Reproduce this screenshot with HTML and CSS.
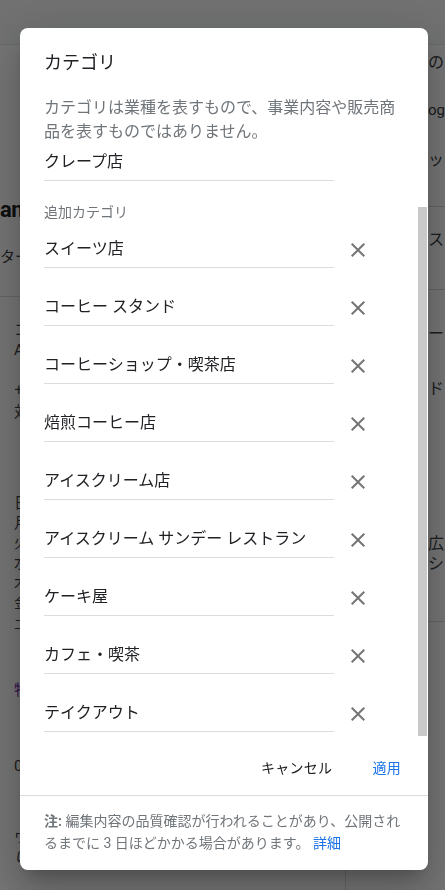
FILE: index.html
```html
<!DOCTYPE html>
<html lang="ja">

<head>
    <meta charset="UTF-8" />
    <meta name="viewport" content="width=device-width, initial-scale=1.0" />
    <title>カテゴリ</title>

    <link rel="stylesheet" href="styles.css">
</head>

<body>
    <!-- page behind the modal, only its edges show -->
    <div class="page">
        <header class="bg-header"></header>
        <div class="bg-cols">
            <section class="bg-main">
                <div class="bg-hero"></div>
                <h1 class="bg-title">ant</h1>
                <div class="bg-sub">ター</div>
                <div class="bg-rule"></div>
                <div class="bg-block bg-block--first">
                    <p>コ</p>
                    <p>A</p>
                </div>
                <div class="bg-block">
                    <p>サ</p>
                    <p>対</p>
                </div>
                <div class="bg-block bg-block--hours">
                    <p>日</p>
                    <p>月</p>
                    <p>火</p>
                    <p>水</p>
                    <p>木</p>
                    <p>金</p>
                    <p>土</p>
                </div>
                <div class="bg-block bg-block--link">
                    <p>特</p>
                </div>
                <div class="bg-block bg-block--phone">
                    <p>0</p>
                </div>
                <div class="bg-block bg-block--web">
                    <p>ウ</p>
                    <p class="bg-em">い</p>
                </div>
            </section>
            <aside class="bg-side">
                <p class="bg-s1">の</p>
                <p class="bg-s2">ogl</p>
                <p class="bg-s3">ップ</p>
                <div class="bg-rule bg-s4"></div>
                <p class="bg-s5">スキ</p>
                <div class="bg-rule bg-s6"></div>
                <p class="bg-s7">ー</p>
                <p class="bg-s8">ド</p>
                <p class="bg-s9">広告</p>
                <p>ショ</p>
                <div class="bg-rule bg-s10"></div>
            </aside>
        </div>
    </div>

    <div class="scrim">
        <div class="dialog" role="dialog" aria-labelledby="dlg-title">
            <div class="dialog-body">
                <h2 id="dlg-title" class="dialog-title">カテゴリ</h2>
                <p class="dialog-desc">カテゴリは業種を表すもので、事業内容や販売商品を表すものではありません。</p>

                <div class="field field--primary">クレープ店</div>

                <div class="section-label">追加カテゴリ</div>

                <div class="cat-row cat-row--first">
                    <div class="field">スイーツ店</div>
                    <button class="icon-btn" aria-label="削除"><svg viewBox="0 0 24 24"><path d="M19 6.41L17.59 5 12 10.59 6.41 5 5 6.41 10.59 12 5 17.59 6.41 19 12 13.41 17.59 19 19 17.59 13.41 12z"/></svg></button>
                </div>
                <div class="cat-row">
                    <div class="field">コーヒー スタンド</div>
                    <button class="icon-btn" aria-label="削除"><svg viewBox="0 0 24 24"><path d="M19 6.41L17.59 5 12 10.59 6.41 5 5 6.41 10.59 12 5 17.59 6.41 19 12 13.41 17.59 19 19 17.59 13.41 12z"/></svg></button>
                </div>
                <div class="cat-row">
                    <div class="field">コーヒーショップ・喫茶店</div>
                    <button class="icon-btn" aria-label="削除"><svg viewBox="0 0 24 24"><path d="M19 6.41L17.59 5 12 10.59 6.41 5 5 6.41 10.59 12 5 17.59 6.41 19 12 13.41 17.59 19 19 17.59 13.41 12z"/></svg></button>
                </div>
                <div class="cat-row">
                    <div class="field">焙煎コーヒー店</div>
                    <button class="icon-btn" aria-label="削除"><svg viewBox="0 0 24 24"><path d="M19 6.41L17.59 5 12 10.59 6.41 5 5 6.41 10.59 12 5 17.59 6.41 19 12 13.41 17.59 19 19 17.59 13.41 12z"/></svg></button>
                </div>
                <div class="cat-row">
                    <div class="field">アイスクリーム店</div>
                    <button class="icon-btn" aria-label="削除"><svg viewBox="0 0 24 24"><path d="M19 6.41L17.59 5 12 10.59 6.41 5 5 6.41 10.59 12 5 17.59 6.41 19 12 13.41 17.59 19 19 17.59 13.41 12z"/></svg></button>
                </div>
                <div class="cat-row">
                    <div class="field">アイスクリーム サンデー レストラン</div>
                    <button class="icon-btn" aria-label="削除"><svg viewBox="0 0 24 24"><path d="M19 6.41L17.59 5 12 10.59 6.41 5 5 6.41 10.59 12 5 17.59 6.41 19 12 13.41 17.59 19 19 17.59 13.41 12z"/></svg></button>
                </div>
                <div class="cat-row">
                    <div class="field">ケーキ屋</div>
                    <button class="icon-btn" aria-label="削除"><svg viewBox="0 0 24 24"><path d="M19 6.41L17.59 5 12 10.59 6.41 5 5 6.41 10.59 12 5 17.59 6.41 19 12 13.41 17.59 19 19 17.59 13.41 12z"/></svg></button>
                </div>
                <div class="cat-row">
                    <div class="field">カフェ・喫茶</div>
                    <button class="icon-btn" aria-label="削除"><svg viewBox="0 0 24 24"><path d="M19 6.41L17.59 5 12 10.59 6.41 5 5 6.41 10.59 12 5 17.59 6.41 19 12 13.41 17.59 19 19 17.59 13.41 12z"/></svg></button>
                </div>
                <div class="cat-row">
                    <div class="field">テイクアウト</div>
                    <button class="icon-btn" aria-label="削除"><svg viewBox="0 0 24 24"><path d="M19 6.41L17.59 5 12 10.59 6.41 5 5 6.41 10.59 12 5 17.59 6.41 19 12 13.41 17.59 19 19 17.59 13.41 12z"/></svg></button>
                </div>
            </div>

            <div class="dialog-actions">
                <button class="text-btn">キャンセル</button>
                <button class="text-btn text-btn--primary">適用</button>
            </div>

            <div class="dialog-note">
                <b>注:</b> 編集内容の品質確認が行われることがあり、公開されるまでに 3 日ほどかかる場合があります。 <a href="#">詳細</a>
            </div>

            <div class="scroll-thumb"></div>
        </div>
    </div>
</body>

</html>
```

FILE: styles.css
```css
* {
    margin: 0;
    padding: 0;
    box-sizing: border-box;
}

html,
body {
    height: 100%;
}

body {
    font-family: Roboto, "Noto Sans CJK JP", sans-serif;
    background: #fff;
    color: #202124;
    overflow: hidden;
}

/**
* Page behind the dialog
*/
.bg-header {
    height: 45px;
    background: #f6f7f8;
    border-bottom: 1px solid #e4e4e4;
}

.bg-cols {
    display: grid;
    grid-template-columns: 346px 1fr;
    height: 845px;
}

.bg-main {
    border-right: 1px solid #dadce0;
    font-size: 15px;
    line-height: 20px;
    color: #3c4043;
}

.bg-hero {
    height: 150px;
}

.bg-title {
    font-size: 22px;
    line-height: 30px;
    font-weight: 700;
    color: #202124;
    letter-spacing: -0.5px;
}

.bg-sub {
    margin-top: 22px;
    font-size: 15px;
    line-height: 20px;
}

.bg-rule {
    height: 1px;
    background: #dadce0;
}

.bg-main .bg-rule {
    margin-top: 29px;
}

.bg-block {
    padding-left: 14px;
    margin-top: 22px;
}

.bg-block--first {
    margin-top: 23px;
}

.bg-block--hours {
    margin-top: 71px;
}

.bg-block--link {
    margin-top: 47px;
    color: #681da8;
}

.bg-block--phone {
    margin-top: 56px;
}

.bg-block--web {
    margin-top: 51px;
}

.bg-em {
    font-style: italic;
}

.bg-side {
    padding-left: 82px;
    font-size: 16px;
    line-height: 20px;
    color: #3c4043;
    white-space: nowrap;
    overflow: hidden;
}

.bg-side .bg-rule {
    margin-left: -82px;
}

.bg-s1 { margin-top: 8px; }
.bg-s2 { margin-top: 27px; font-size: 15px; }
.bg-s3 { margin-top: 30px; }
.bg-s4 { margin-top: 36px; }
.bg-s5 { margin-top: 23px; }
.bg-s6 { margin-top: 39px; }
.bg-s7 { margin-top: 34px; }
.bg-s8 { margin-top: 35px; }
.bg-s9 { margin-top: 135px; }
.bg-s10 { margin-top: 47px; }

/**
* Modal
*/
.scrim {
    position: fixed;
    inset: 0;
    display: flex;
    padding: 28px 17px 20px 20px;
    background: rgba(0, 0, 0, 0.54);
}

.dialog {
    position: relative;
    flex: 1;
    display: flex;
    flex-direction: column;
    background: #fff;
    border-radius: 8px;
    box-shadow: 0 11px 15px -7px rgba(0, 0, 0, 0.2), 0 24px 38px 3px rgba(0, 0, 0, 0.14), 0 9px 46px 8px rgba(0, 0, 0, 0.12);
    overflow: hidden;
}

.dialog-body {
    padding: 23px 24px 0;
}

.dialog-title {
    font-size: 18px;
    line-height: 24px;
    font-weight: 400;
    color: #202124;
}

.dialog-desc {
    margin-top: 21px;
    font-size: 16px;
    line-height: 24px;
    color: #70757a;
}

.field {
    width: 290px;
    font-size: 16px;
    line-height: 24px;
    padding-bottom: 6px;
    border-bottom: 1px solid #dadce0;
    color: #202124;
    white-space: nowrap;
}

.field--primary {
    margin-top: 6px;
}

.section-label {
    margin-top: 21px;
    font-size: 14px;
    line-height: 20px;
    color: #70757a;
}

.cat-row {
    display: flex;
    align-items: flex-start;
    margin-top: 27px;
}

.cat-row--first {
    margin-top: 15px;
}

.icon-btn {
    display: flex;
    width: 24px;
    height: 24px;
    margin: 1px 0 0 12px;
    border: 0;
    background: none;
    color: #757575;
    cursor: pointer;

    svg {
        width: 24px;
        height: 24px;
        fill: currentColor;
    }
}

.dialog-actions {
    display: flex;
    justify-content: flex-end;
    gap: 24px;
    padding: 18px 19px 9px;
}

.text-btn {
    height: 36px;
    padding: 0 8px;
    border: 0;
    background: none;
    font-family: inherit;
    font-size: 14px;
    line-height: 36px;
    color: #202124;
    letter-spacing: 0.3px;
    cursor: pointer;
}

.text-btn--primary {
    color: #1a73e8;
}

.dialog-note {
    border-top: 1px solid #dadce0;
    padding: 14px 24px 16px;
    font-size: 14px;
    line-height: 22px;
    color: #70757a;

    b {
        font-weight: 700;
    }

    a {
        color: #1a73e8;
        text-decoration: none;
    }
}

.scroll-thumb {
    position: absolute;
    top: 179px;
    right: 1px;
    width: 9px;
    height: 529px;
    background: #c9c9c9;
}
```
